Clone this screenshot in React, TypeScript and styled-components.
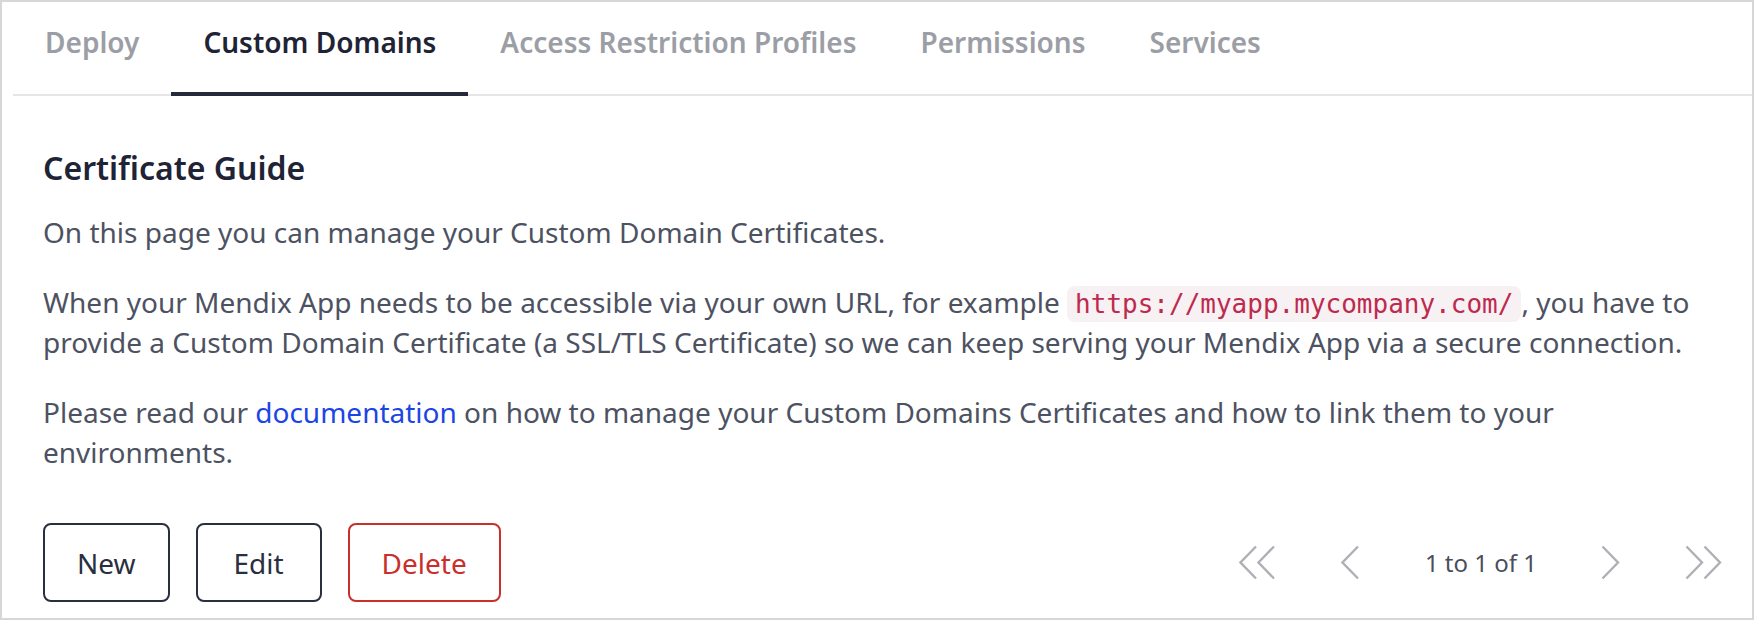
import React from "react";
import styled, { createGlobalStyle } from "styled-components";

const GlobalStyle = createGlobalStyle`
  html, body {
    margin: 0;
    padding: 0;
    background: #ffffff;
  }
  body {
    font-family: "Noto Sans", "Open Sans", "Liberation Sans", sans-serif;
    color: #4d5262;
  }
  * {
    box-sizing: border-box;
  }
`;

const Frame = styled.div`
  width: 1754px;
  height: 620px;
  border: 2px solid #d7d7d7;
  display: flex;
  flex-direction: column;
  background: #fff;
`;

const TabBar = styled.nav`
  display: flex;
  margin-left: 11px;
  border-bottom: 2px solid #e6e6e6;
`;

const Tab = styled.div<{ $active?: boolean }>`
  padding: 20px 32px 30px;
  font-size: 28px;
  line-height: 40px;
  font-weight: 600;
  color: ${(p) => (p.$active ? "#1f2336" : "#9c9ea6")};
  border-bottom: 4px solid ${(p) => (p.$active ? "#252a3b" : "transparent")};
  margin-bottom: -2px;
  cursor: pointer;
`;

const Content = styled.section`
  flex: 1;
  display: flex;
  flex-direction: column;
  padding: 50px 29px 16px 41px;
`;

const Heading = styled.h3`
  margin: 0 0 22px;
  font-size: 32px;
  line-height: 44px;
  font-weight: 600;
  color: #1f2336;
`;

const Paragraph = styled.p`
  margin: 0 0 30px;
  font-size: 28px;
  line-height: 40px;
  color: #4d5262;
`;

const Code = styled.code`
  font-family: "DejaVu Sans Mono", "Liberation Mono", monospace;
  font-size: 26px;
  line-height: 30px;
  padding: 3px 8px;
  color: #bd2a4e;
  background: #f8f1f3;
  border-radius: 8px;
`;

const Link = styled.a`
  color: #1b45e4;
  text-decoration: none;
`;

const Footer = styled.div`
  margin-top: auto;
  display: flex;
  align-items: center;
  justify-content: space-between;
`;

const Actions = styled.div`
  display: flex;
  gap: 26px;
`;

const Button = styled.button<{ $danger?: boolean }>`
  height: 79px;
  min-width: 126px;
  padding: 0 32px;
  font-family: inherit;
  font-size: 28px;
  background: #fff;
  border-radius: 8px;
  border: 2px solid ${(p) => (p.$danger ? "#c9302c" : "#2a2f40")};
  color: ${(p) => (p.$danger ? "#c9302c" : "#2a2f40")};
  cursor: pointer;
`;

const Pager = styled.div`
  display: flex;
  align-items: center;
`;

const PagerButton = styled.button`
  border: 0;
  background: none;
  padding: 0;
  margin: 0 32px;
  display: flex;
  align-items: center;
  color: #aeb0b5;
  cursor: pointer;

  &:first-child {
    margin-left: 0;
  }
  &:last-child {
    margin-right: 0;
  }
`;

const PagerLabel = styled.span`
  margin: 0 32px;
  font-size: 24px;
  line-height: 40px;
  color: #4a4e5b;
`;

const Chevron = ({ dir, double }: { dir: "left" | "right"; double?: boolean }) => {
  const w = double ? 38 : 20;
  const pts = (x: number) =>
    dir === "left" ? `${x + 17},1.5 ${x + 1.5},17.5 ${x + 17},33.5` : `${x + 1.5},1.5 ${x + 17},17.5 ${x + 1.5},33.5`;
  return (
    <svg width={w} height={35} viewBox={`0 0 ${w} 35`} fill="none">
      <polyline points={pts(0)} stroke="currentColor" strokeWidth="2.4" />
      {double && <polyline points={pts(18)} stroke="currentColor" strokeWidth="2.4" />}
    </svg>
  );
};

const tabs = ["Deploy", "Custom Domains", "Access Restriction Profiles", "Permissions", "Services"];

export default function App() {
  return (
    <>
      <GlobalStyle />
      <Frame>
        <TabBar>
          {tabs.map((t) => (
            <Tab key={t} $active={t === "Custom Domains"}>
              {t}
            </Tab>
          ))}
        </TabBar>
        <Content>
          <Heading>Certificate Guide</Heading>
          <Paragraph>On this page you can manage your Custom Domain Certificates.</Paragraph>
          <Paragraph>
            When your Mendix App needs to be accessible via your own URL, for example{" "}
            <Code>https://myapp.mycompany.com/</Code>, you have to provide a Custom Domain Certificate (a
            SSL/TLS Certificate) so we can keep serving your Mendix App via a secure connection.
          </Paragraph>
          <Paragraph>
            Please read our <Link href="#">documentation</Link> on how to manage your Custom Domains
            Certificates and how to link them to your environments.
          </Paragraph>
          <Footer>
            <Actions>
              <Button>New</Button>
              <Button>Edit</Button>
              <Button $danger>Delete</Button>
            </Actions>
            <Pager>
              <PagerButton>
                <Chevron dir="left" double />
              </PagerButton>
              <PagerButton>
                <Chevron dir="left" />
              </PagerButton>
              <PagerLabel>1 to 1 of 1</PagerLabel>
              <PagerButton>
                <Chevron dir="right" />
              </PagerButton>
              <PagerButton>
                <Chevron dir="right" double />
              </PagerButton>
            </Pager>
          </Footer>
        </Content>
      </Frame>
    </>
  );
}
